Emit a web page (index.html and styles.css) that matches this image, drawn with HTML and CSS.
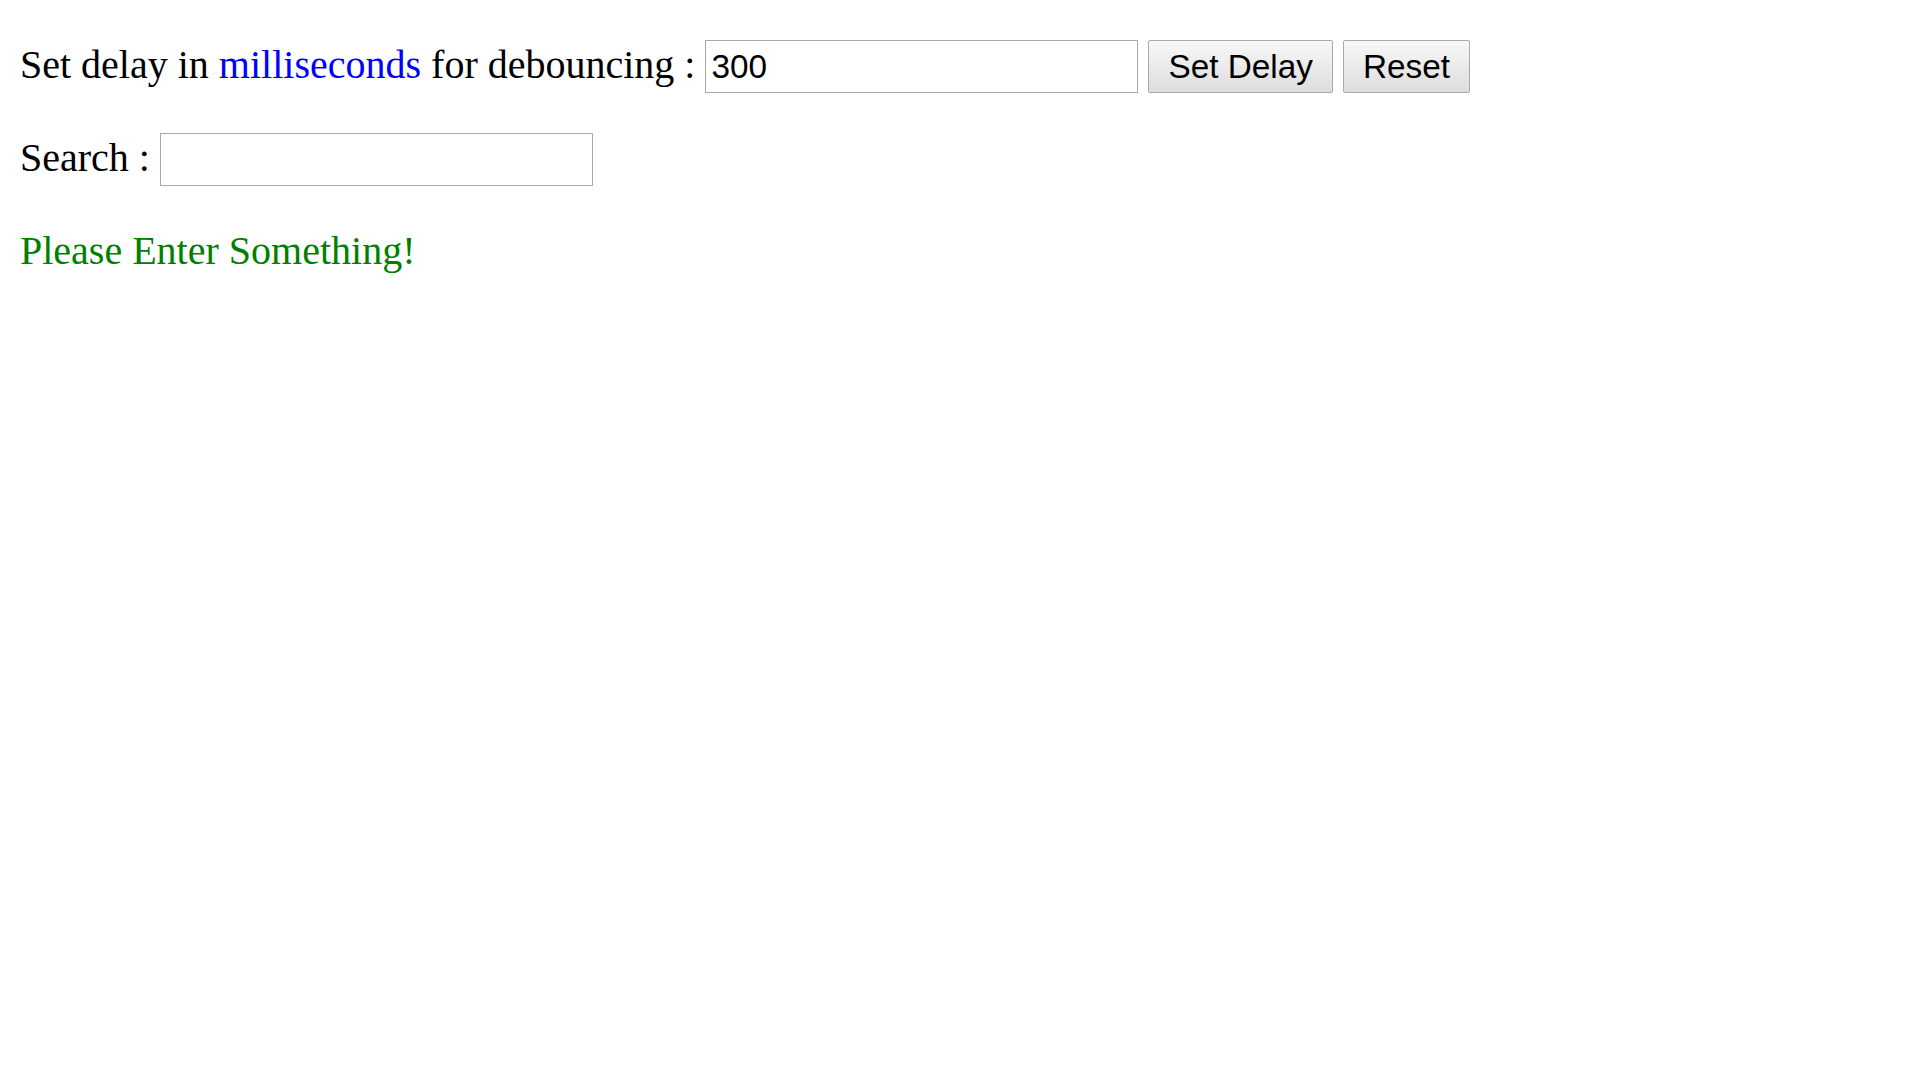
FILE: index.html
```html
<!DOCTYPE html>
<html>
<head>
<meta charset="utf-8">
<title>Debounce</title>
<link rel="stylesheet" href="styles.css">
</head>
<body>
<p class="row">Set delay in <span class="blue">milliseconds</span> for debouncing : <input class="field" type="text" value="300"> <button class="btn">Set Delay</button> <button class="btn">Reset</button></p>
<p class="row">Search : <input class="field" type="text"></p>
<p class="row msg">Please Enter Something!</p>
</body>
</html>
```

FILE: styles.css
```css
html, body {
  background: #ffffff;
}
body {
  margin: 0;
  padding: 0 20px;
  font-family: "Liberation Serif", "Times New Roman", serif;
  font-size: 40px;
  color: #000000;
}
.row {
  margin: 40px 0;
}
.blue {
  color: #0000ff;
}
.msg {
  color: #008000;
  padding-top: 1px;
}
.field {
  box-sizing: border-box;
  width: 433px;
  height: 53px;
  margin: 0;
  padding: 0 5px;
  border: 1px solid #a9a9a9;
  border-radius: 0;
  background: #ffffff;
  font-family: "Liberation Sans", Arial, sans-serif;
  font-size: 33.33px;
  color: #000000;
  outline: none;
  vertical-align: baseline;
}
.btn {
  box-sizing: border-box;
  height: 53px;
  margin: 0;
  padding: 0 19px;
  border: 1px solid #a9a9a9;
  border-radius: 2px;
  background: linear-gradient(#f8f8f8, #dddddd);
  font-family: "Liberation Sans", Arial, sans-serif;
  font-size: 33.33px;
  color: #000000;
  vertical-align: baseline;
}
```
